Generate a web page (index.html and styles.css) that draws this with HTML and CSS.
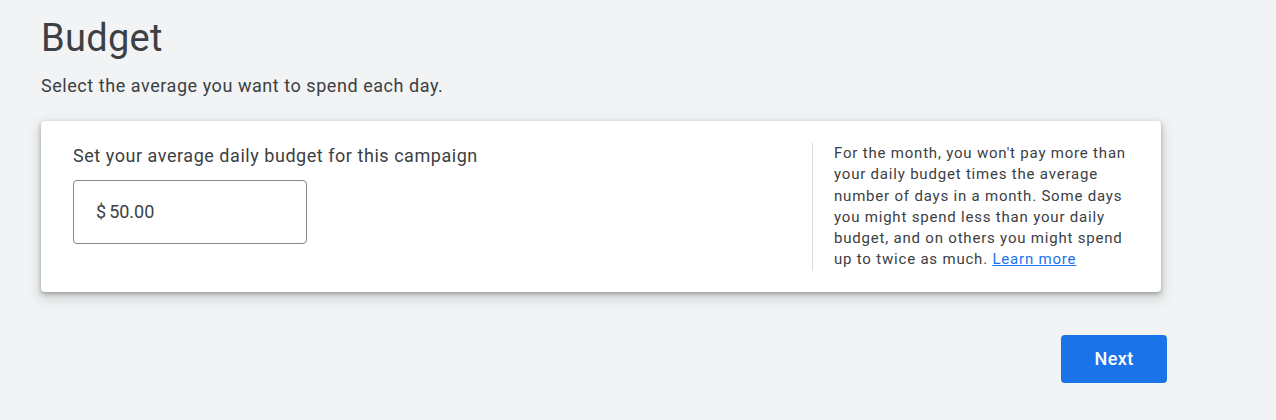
FILE: index.html
```html
<!DOCTYPE html>
<html lang="en">
<head>
<meta charset="utf-8">
<title>Budget</title>
<link rel="stylesheet" href="styles.css">
</head>
<body>
<main class="page">
  <h1 class="title">Budget</h1>
  <p class="subtitle">Select the average you want to spend each day.</p>
  <section class="card">
    <div class="card-main">
      <label class="field-label" for="budget">Set your average daily budget for this campaign</label>
      <div class="input-box">
        <span class="currency">$</span><span class="amount" id="budget">50.00</span>
      </div>
    </div>
    <aside class="card-side">
      <p class="help">For the month, you won't pay more than your daily budget times the average number of days in a month. Some days you might spend less than your daily budget, and on others you might spend up to twice as much. <a class="link" href="#">Learn more</a></p>
    </aside>
  </section>
  <div class="actions">
    <button class="btn-next" type="button">Next</button>
  </div>
</main>
</body>
</html>
```

FILE: styles.css
```css
* { box-sizing: border-box; }
html, body {
  margin: 0;
  background: #f1f3f4;
  font-family: Roboto, "Liberation Sans", Arial, sans-serif;
  color: #3c4043;
}
.page {
  width: 1167px;
  padding: 14px 0 0 41px;
  display: flex;
  flex-direction: column;
}
.title {
  margin: 0;
  font-size: 38px;
  line-height: 48px;
  font-weight: 400;
  letter-spacing: 0.3px;
  color: #3c4043;
}
.subtitle {
  margin: 12px 0 0;
  font-size: 18px;
  line-height: 24px;
  letter-spacing: 0.55px;
  color: #3c4043;
}
.card {
  margin-top: 23px;
  width: 1120px;
  background: #fff;
  border-radius: 4px;
  box-shadow: 0 2px 4px rgba(60, 64, 67, 0.4), 0 5px 12px 3px rgba(60, 64, 67, 0.15);
  padding: 22px 32px 21px;
  display: flex;
  justify-content: space-between;
}
.card-main {
  display: flex;
  flex-direction: column;
  gap: 12px;
  padding-top: 1px;
}
.field-label {
  font-size: 18px;
  line-height: 24px;
  letter-spacing: 0.54px;
  color: #3c4043;
}
.input-box {
  width: 234px;
  height: 64px;
  border: 1px solid #80868b;
  border-radius: 4px;
  display: flex;
  align-items: center;
  padding-left: 22px;
  font-size: 18px;
  line-height: 24px;
  color: #3c4043;
}
.currency { margin-right: 3px; }
.card-side {
  width: 317px;
  border-left: 1px solid #dadce0;
  padding-left: 21px;
}
.help {
  margin: 0;
  font-size: 15px;
  line-height: 21.3px;
  letter-spacing: 0.8px;
  color: #3c4043;
}
.link {
  color: #1a73e8;
  text-decoration: underline;
  text-underline-offset: 1px;
}
.actions {
  margin-top: 43px;
  display: flex;
  justify-content: flex-end;
  width: 1126px;
}
.btn-next {
  width: 106px;
  height: 48px;
  border: none;
  border-radius: 4px;
  background: #1a73e8;
  color: #fff;
  font-family: Roboto, "Liberation Sans", Arial, sans-serif;
  font-size: 18px;
  font-weight: 500;
  letter-spacing: 0.4px;
}
```
